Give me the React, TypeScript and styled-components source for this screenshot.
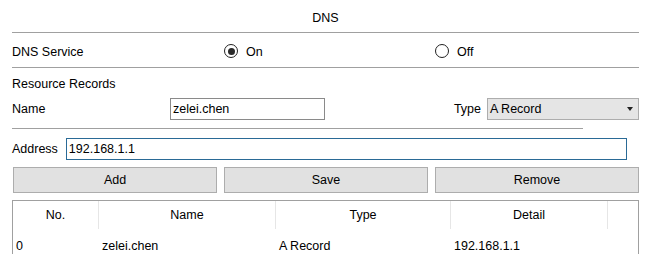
import React from 'react';
import styled, { createGlobalStyle } from 'styled-components';

const Global = createGlobalStyle`
  html, body { margin: 0; padding: 0; background: #fff; }
  body {
    font-family: "Liberation Sans", Arial, sans-serif;
    font-size: 12.5px;
    color: #000;
  }
`;

const Page = styled.div`
  width: 627px;
  padding-left: 12px;
  height: 259px;
  overflow: hidden;
`;

const Title = styled.div`
  text-align: center;
  line-height: 16px;
  padding: 10px 0 6px;
  border-bottom: 1px solid #a0a0a0;
`;

const ServiceRow = styled.div`
  display: grid;
  grid-template-columns: 212px 211px 1fr;
  align-items: center;
  height: 16px;
  line-height: 16px;
  padding: 11px 0 7px;
  border-bottom: 1px solid #a0a0a0;
`;

const RadioOption = styled.label`
  display: flex;
  align-items: center;
  gap: 8px;
  height: 16px;
`;

const RadioCircle = styled.span<{ $checked?: boolean }>`
  position: relative;
  width: 14px;
  height: 14px;
  box-sizing: border-box;
  border: 1px solid #222;
  border-radius: 50%;
  background: #fff;
  margin-bottom: 2px;
  &::after {
    content: '';
    display: ${(p) => (p.$checked ? 'block' : 'none')};
    position: absolute;
    left: 2.5px;
    top: 2.5px;
    width: 7px;
    height: 7px;
    border-radius: 50%;
    background: #2a2a2a;
  }
`;

const SectionHeading = styled.div`
  line-height: 16px;
  padding-top: 8px;
`;

const NameRow = styled.div`
  display: flex;
  align-items: center;
  margin-top: 6px;
  height: 22px;
`;

const FieldLabel = styled.span<{ $width?: number }>`
  width: ${(p) => (p.$width ? `${p.$width}px` : 'auto')};
  flex: none;
`;

const TextBox = styled.div<{ $width: number; $focused?: boolean }>`
  box-sizing: border-box;
  width: ${(p) => p.$width}px;
  height: 22px;
  border: 1px solid ${(p) => (p.$focused ? '#2a6a96' : '#8a8a8a')};
  background: #fff;
  padding-left: 2px;
  line-height: 20px;
  flex: none;
`;

const Spacer = styled.div`
  flex: 1;
`;

const TypeLabel = styled.span`
  margin-right: 6px;
`;

const Select = styled.div`
  box-sizing: border-box;
  width: 152px;
  height: 22px;
  border: 1px solid #adadad;
  background: #e5e5e5;
  display: flex;
  align-items: center;
  justify-content: space-between;
  padding: 0 5px 0 2px;
  line-height: 20px;
`;

const Arrow = styled.span`
  width: 0;
  height: 0;
  border-left: 3.5px solid transparent;
  border-right: 3.5px solid transparent;
  border-top: 4px solid #222;
`;

const Divider = styled.div`
  width: 571px;
  border-top: 1px solid #a0a0a0;
  margin-top: 8px;
`;

const AddressRow = styled.div`
  display: flex;
  align-items: center;
  gap: 8px;
  margin-top: 9px;
  height: 22px;
`;

const ButtonRow = styled.div`
  display: grid;
  grid-template-columns: repeat(3, 204px);
  gap: 7px;
  padding-left: 1px;
  margin-top: 7px;
`;

const Button = styled.button`
  box-sizing: border-box;
  height: 26px;
  border: 1px solid #adadad;
  background: #e1e1e1;
  font: inherit;
  color: #000;
  padding: 0;
  cursor: pointer;
`;

const Table = styled.div`
  margin-top: 7px;
  box-sizing: border-box;
  width: 627px;
  border: 1px solid #a0a0a0;
  border-bottom: none;
  display: grid;
  grid-template-columns: 86px 177px 175px 157px 1fr;
  line-height: 16px;
`;

const HeadCell = styled.div<{ $last?: boolean }>`
  text-align: center;
  padding: 6px 0;
  border-right: ${(p) => (p.$last ? 'none' : '1px solid #e6e6e6')};
`;

const Cell = styled.div`
  padding: 9px 0 0 3px;
`;

const columns = ['No.', 'Name', 'Type', 'Detail', ''];
const rows = [['0', 'zelei.chen', 'A Record', '192.168.1.1', '']];

export default function App() {
  return (
    <>
      <Global />
      <Page>
        <Title>DNS</Title>
        <ServiceRow>
          <span>DNS Service</span>
          <RadioOption>
            <RadioCircle $checked />
            On
          </RadioOption>
          <RadioOption>
            <RadioCircle />
            Off
          </RadioOption>
        </ServiceRow>
        <SectionHeading>Resource Records</SectionHeading>
        <NameRow>
          <FieldLabel $width={158}>Name</FieldLabel>
          <TextBox $width={155}>zelei.chen</TextBox>
          <Spacer />
          <TypeLabel>Type</TypeLabel>
          <Select>
            A Record
            <Arrow />
          </Select>
        </NameRow>
        <Divider />
        <AddressRow>
          <FieldLabel>Address</FieldLabel>
          <TextBox $width={561} $focused>
            192.168.1.1
          </TextBox>
        </AddressRow>
        <ButtonRow>
          <Button>Add</Button>
          <Button>Save</Button>
          <Button>Remove</Button>
        </ButtonRow>
        <Table>
          {columns.map((c, i) => (
            <HeadCell key={i} $last={i === columns.length - 1}>
              {c}
            </HeadCell>
          ))}
          {rows.map((r, ri) =>
            r.map((v, ci) => <Cell key={`${ri}-${ci}`}>{v}</Cell>)
          )}
        </Table>
      </Page>
    </>
  );
}
